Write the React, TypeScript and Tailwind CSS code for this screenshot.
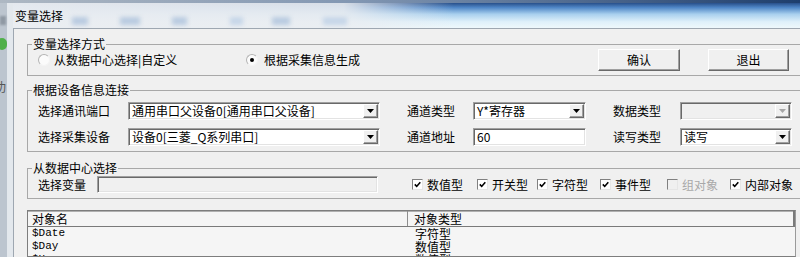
import React from 'react';

const sunken =
  'border border-t-[#a0a0a0] border-l-[#a0a0a0] border-r-white border-b-white shadow-[inset_1px_1px_0_#696969,inset_-1px_-1px_0_#e3e3e3]';
const raised =
  'border border-t-white border-l-white border-r-[#696969] border-b-[#696969] shadow-[inset_-1px_-1px_0_#a0a0a0]';

const Arrow = ({ disabled }: { disabled?: boolean }) => (
  <svg width="7" height="4" viewBox="0 0 7 4">
    <path d="M0 0h7L3.5 4z" fill={disabled ? '#a6a6a6' : '#000'} />
  </svg>
);

const Combo = ({ value, width, disabled }: { value?: string; width: string; disabled?: boolean }) => (
  <div className={`flex shrink-0 h-[18px] p-px ${width} ${disabled ? 'bg-[#f0f0f0]' : 'bg-white'} ${sunken}`}>
    <span className="flex-1 pl-[2px] leading-[14px] whitespace-nowrap">{value}</span>
    <div className={`w-[15px] h-[14px] flex items-center justify-center bg-[#f0f0f0] ${raised}`}>
      <Arrow disabled={disabled} />
    </div>
  </div>
);

const Radio = ({ checked }: { checked?: boolean }) => (
  <div className="w-[12px] h-[12px] rounded-full bg-[#fbfbfb] border border-t-[#b4b4b4] border-l-[#b4b4b4] border-r-[#f4f4f4] border-b-[#f4f4f4] flex items-center justify-center">
    {checked && <div className="w-[4px] h-[4px] rounded-full bg-black" />}
  </div>
);

const Check = ({ label, width, disabled }: { label: string; width: string; disabled?: boolean }) => (
  <div className={`flex items-center ${width}`}>
    <div
      className={`w-[11px] h-[11px] flex items-center justify-center border border-t-[#808080] border-l-[#808080] border-r-[#e6e6e6] border-b-[#e6e6e6] ${
        disabled ? 'bg-[#f0f0f0]' : 'bg-white'
      }`}
    >
      {!disabled && (
        <svg width="7" height="7" viewBox="0 0 7 7">
          <path d="M0.8 3.4L2.7 5.4L6.3 1.2" stroke="#000" strokeWidth="1.6" fill="none" />
        </svg>
      )}
    </div>
    <span className={`ml-[4px] whitespace-nowrap ${disabled ? 'text-[#a8a8a8]' : ''}`}>{label}</span>
  </div>
);

const rows = [
  ['$Date', '字符型'],
  ['$Day', '数值型'],
  ['$Hour', '数值型'],
];

export default function App() {
  return (
    <div className="w-[800px] h-[257px] overflow-hidden bg-[#d6dbe0] text-[12px] leading-[14px] text-black font-['Noto_Sans_CJK_SC','Noto_Sans',sans-serif]">
      {/* background window top edge */}
      <div className="h-[3px] bg-[linear-gradient(to_right,#aeb8c3,#8196b2_45%,#1e3e6d)]" />
      <div className="flex h-[254px]">
        {/* background app peeking on the left */}
        <div className="relative w-[13px] shrink-0 flex overflow-hidden">
          <div className="w-[7px] bg-[#bcc5cf]" />
          <div className="w-[6px] bg-[#e3e8ed]" />
          <div className="absolute left-0 top-[13px] w-[6px] h-[9px] bg-[#8f99a4] blur-[1px]" />
          <div className="absolute left-[-3px] top-[35px] w-[10px] h-[12px] rounded-full bg-[#4fb04a] blur-[0.5px]" />
          <div className="absolute left-[-6px] top-[77px] text-[12px] text-[#555]">功</div>
        </div>

        {/* dialog */}
        <div className="flex-1 min-w-0 flex flex-col">
          <div className="h-[25px] shrink-0 flex items-center pl-[2px] bg-[linear-gradient(to_right,rgba(234,237,241,0.97)_0%,rgba(234,237,241,0.9)_42%,rgba(234,237,241,0)_56%),linear-gradient(to_bottom,#284f8a_0%,#4f86c6_18%,#a9d0ee_45%,#dff0fa_75%,#eef8fc_100%)]">
            <span className="whitespace-nowrap">变量选择</span>
            <div className="flex self-end mb-[3px]">
              <div className="ml-[9px] w-[16px] h-[8px] bg-[#b9cbe0] blur-[2px]" />
              <div className="ml-[32px] w-[20px] h-[8px] bg-[#b9cbe0] blur-[2px]" />
              <div className="ml-[32px] w-[15px] h-[8px] bg-[#b9cbe0] blur-[2px]" />
              <div className="ml-[43px] w-[13px] h-[8px] bg-[#c6d6e8] blur-[2px]" />
              <div className="ml-[29px] w-[18px] h-[8px] bg-[#b9cbe0] blur-[2px]" />
              <div className="ml-[33px] w-[24px] h-[8px] bg-[#c6d6e8] blur-[2px]" />
            </div>
          </div>

          <div className="flex-1 min-h-0 flex">
            <div className="w-[2px] bg-[#dfe8f1]" />
            <div className="flex-1 min-h-0 flex bg-[#f0f0f0] border-t border-l border-[#9ea7b1]">
              <div className="flex-1 min-h-0 flex flex-col pl-[13px]">
                {/* 变量选择方式 */}
                <fieldset className="shrink-0 mt-[8px] border border-r-0 border-[#a8a8a8]">
                  <legend className="ml-[4px] px-px leading-[14px]">变量选择方式</legend>
                  <div className="-mt-[2px] mb-[4px] h-[22px] flex items-center pl-[10px]">
                    <div className="w-[208px] flex items-center">
                      <Radio />
                      <span className="ml-[4px] whitespace-nowrap">从数据中心选择|自定义</span>
                    </div>
                    <div className="flex items-center">
                      <Radio checked />
                      <span className="ml-[6px] whitespace-nowrap">根据采集信息生成</span>
                    </div>
                    <button className={`ml-auto w-[82px] h-[22px] bg-[#f0f0f0] ${raised}`}>确认</button>
                    <button className={`ml-[28px] mr-[11px] w-[81px] h-[22px] bg-[#f0f0f0] ${raised}`}>退出</button>
                  </div>
                </fieldset>

                {/* 根据设备信息连接 */}
                <fieldset className="shrink-0 mt-[7px] border border-r-0 border-[#a8a8a8]">
                  <legend className="ml-[4px] px-px leading-[14px]">根据设备信息连接</legend>
                  <div className="mt-[5px] mb-[5px] pl-[10px] flex flex-col gap-[8px]">
                    <div className="flex items-center h-[18px]">
                      <span className="w-[90px] shrink-0">选择通讯端口</span>
                      <Combo width="w-[252px]" value="通用串口父设备0[通用串口父设备]" />
                      <span className="ml-[27px] w-[66px] shrink-0">通道类型</span>
                      <Combo width="w-[113px]" value="Y*寄存器" />
                      <span className="ml-[27px] w-[67px] shrink-0">数据类型</span>
                      <Combo width="w-[112px]" disabled />
                    </div>
                    <div className="flex items-center h-[18px]">
                      <span className="w-[90px] shrink-0">选择采集设备</span>
                      <Combo width="w-[252px]" value="设备0[三菱_Q系列串口]" />
                      <span className="ml-[27px] w-[66px] shrink-0">通道地址</span>
                      <div className={`w-[113px] shrink-0 h-[18px] bg-white pl-[3px] leading-[16px] ${sunken}`}>60</div>
                      <span className="ml-[27px] w-[67px] shrink-0">读写类型</span>
                      <Combo width="w-[112px]" value="读写" />
                    </div>
                  </div>
                </fieldset>

                {/* 从数据中心选择 */}
                <fieldset className="shrink-0 mt-[9px] border border-r-0 border-[#a8a8a8]">
                  <legend className="ml-[4px] px-px leading-[14px]">从数据中心选择</legend>
                  <div className="mt-px mb-[5px] h-[17px] pl-[10px] flex items-center">
                    <span className="w-[59px] shrink-0">选择变量</span>
                    <div className={`w-[281px] shrink-0 h-[17px] bg-[#f0f0f0] ${sunken}`} />
                    <div className="ml-[34px] flex items-center">
                      <Check width="w-[65px]" label="数值型" />
                      <Check width="w-[60px]" label="开关型" />
                      <Check width="w-[63px]" label="字符型" />
                      <Check width="w-[67px]" label="事件型" />
                      <Check width="w-[63px]" label="组对象" disabled />
                      <Check width="w-[70px]" label="内部对象" />
                    </div>
                  </div>
                </fieldset>

                {/* object list */}
                <div className="mt-[11px] mr-[4px] flex-1 min-h-0 overflow-hidden bg-[#f5f5f5] border border-[#7d7d7d] border-r-[#9a9a9a]">
                  <div className="flex h-[16px] border-b border-[#7a7a7a] shadow-[inset_0_1px_0_#b0b0b0]">
                    <div className="w-[380px] shrink-0 pl-[4px] leading-[15px] border-r border-[#8e8e8e]">对象名</div>
                    <div className="flex-1 pl-[6px] leading-[15px] border-r-2 border-[#7a7a7a]">对象类型</div>
                  </div>
                  {rows.map(([name, type]) => (
                    <div key={name} className="flex h-[13px] leading-[13px]">
                      <div className="w-[381px] shrink-0 pl-[4px] font-['Liberation_Mono',monospace] text-[11px]">{name}</div>
                      <div className="pl-[6px]">{type}</div>
                    </div>
                  ))}
                </div>
              </div>

              {/* right edge of the dialog */}
              <div className="w-[3px] flex flex-col pt-[15px]">
                <div className="flex-1 flex">
                  <div className="w-[2px] bg-[#5f5f5f]" />
                  <div className="w-px bg-[#cfcfcf]" />
                </div>
              </div>
            </div>
          </div>
        </div>
      </div>
    </div>
  );
}
